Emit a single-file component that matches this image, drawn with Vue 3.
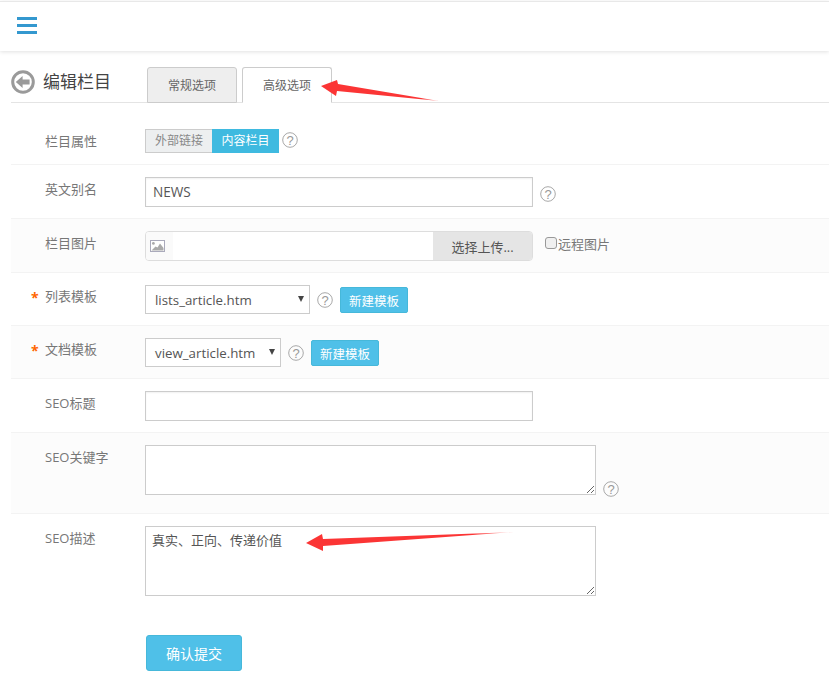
<script setup>
import { ref } from 'vue'
const description = ref('真实、正向、传递价值')
</script>

<template>
  <div class="page">
    <header class="topbar">
      <div class="burger"><i></i><i></i><i></i></div>
    </header>

    <div class="heading">
      <div class="title">
        <svg class="back" width="24" height="24" viewBox="0 0 24 24">
          <circle cx="12" cy="12" r="10.3" fill="#fff" stroke="#9a9a9a" stroke-width="3" />
          <path d="M4.8 12 L11.6 6 V9.6 H18.6 V14.4 H11.6 V18 Z" fill="#9a9a9a" />
        </svg>
        <span>编辑栏目</span>
      </div>
      <div class="tabs">
        <div class="tab off">常规选项</div>
        <div class="tab on">高级选项</div>
      </div>
    </div>

    <form class="form" @submit.prevent>
      <div class="row r1">
        <label class="lab">栏目属性</label>
        <div class="switch"><span class="sw-off">外部链接</span><span class="sw-on">内容栏目</span></div>
        <svg class="q q1" width="16" height="16" viewBox="0 0 16 16"><circle cx="8" cy="8" r="7.3" /><text x="8" y="12.5" text-anchor="middle">?</text></svg>
      </div>

      <div class="row r2">
        <label class="lab">英文别名</label>
        <input class="inp" value="NEWS" />
        <svg class="q q2" width="16" height="16" viewBox="0 0 16 16"><circle cx="8" cy="8" r="7.3" /><text x="8" y="12.5" text-anchor="middle">?</text></svg>
      </div>

      <div class="row alt r3">
        <label class="lab">栏目图片</label>
        <div class="upload">
          <span class="up-icon">
            <svg width="15" height="12" viewBox="0 0 15 12">
              <rect x=".5" y=".5" width="14" height="11" fill="#fff" stroke="#aab" />
              <circle cx="3.4" cy="3.4" r="1.4" fill="#aaa" />
              <path d="M1.5 10.5 L5.5 6.5 L7.5 7.5 L10 3.5 L13.5 8 V10.5 Z" fill="#aaa" />
            </svg>
          </span>
          <span class="up-field"></span>
          <span class="up-btn">选择上传...</span>
        </div>
        <label class="remote"><span class="check"></span>远程图片</label>
      </div>

      <div class="row r4">
        <label class="lab"><em>*</em>列表模板</label>
        <div class="sel w165"><span>lists_article.htm</span><b></b></div>
        <svg class="q q3" width="16" height="16" viewBox="0 0 16 16"><circle cx="8" cy="8" r="7.3" /><text x="8" y="12.5" text-anchor="middle">?</text></svg>
        <button class="new" type="button">新建模板</button>
      </div>

      <div class="row alt r5">
        <label class="lab"><em>*</em>文档模板</label>
        <div class="sel w136"><span>view_article.htm</span><b></b></div>
        <svg class="q q3" width="16" height="16" viewBox="0 0 16 16"><circle cx="8" cy="8" r="7.3" /><text x="8" y="12.5" text-anchor="middle">?</text></svg>
        <button class="new" type="button">新建模板</button>
      </div>

      <div class="row r6">
        <label class="lab">SEO标题</label>
        <input class="inp" />
      </div>

      <div class="row alt r7">
        <label class="lab">SEO关键字</label>
        <textarea class="area a50"></textarea>
        <svg class="q q4" width="16" height="16" viewBox="0 0 16 16"><circle cx="8" cy="8" r="7.3" /><text x="8" y="12.5" text-anchor="middle">?</text></svg>
      </div>

      <div class="row r8">
        <label class="lab">SEO描述</label>
        <textarea class="area a70" v-model="description"></textarea>
      </div>

      <div class="actions">
        <button class="submit" type="button">确认提交</button>
      </div>
    </form>

    <svg class="marks" width="829" height="682" viewBox="0 0 829 682">
      <defs>
        <linearGradient id="fa" x1="0" x2="1" y1="0" y2="0">
          <stop offset="0" stop-color="#fb3535" />
          <stop offset=".85" stop-color="#fb3535" />
          <stop offset="1" stop-color="#fb3535" stop-opacity=".35" />
        </linearGradient>
        <linearGradient id="fb" x1="0" x2="1" y1="0" y2="0">
          <stop offset="0" stop-color="#fb3535" />
          <stop offset=".8" stop-color="#fb3535" />
          <stop offset="1" stop-color="#fb3535" stop-opacity=".3" />
        </linearGradient>
      </defs>
      <path d="M321 86 L337 80 L338 84 L439 101 L337 91 L336 96 Z" fill="url(#fa)" />
      <path d="M306 543 L322 534 L323 539 L514 532 L323 546 L323 551 Z" fill="url(#fb)" />
    </svg>
  </div>
</template>

<style>
html, body { margin: 0; background: #fff; overflow: hidden; }
</style>

<style scoped>
.page {
  position: relative;
  width: 829px;
  height: 682px;
  overflow: hidden;
  background: #fff;
  font-family: "Open Sans", "Noto Sans CJK SC", sans-serif;
  font-size: 13px;
  color: #666;
}
.topbar {
  box-sizing: border-box;
  height: 50px;
  margin-top: 1px;
  border-top: 1px solid #e8e8e8;
  box-shadow: 0 1px 4px rgba(0, 0, 0, .12);
  padding: 15px 0 0 17px;
}
.burger { display: flex; flex-direction: column; gap: 4px; width: 20px; }
.burger i { display: block; height: 3px; background: #3498cf; }
.heading {
  box-sizing: border-box;
  height: 52px;
  margin: 0 0 0 11px;
  padding-top: 16px;
  border-bottom: 1px solid #e4e4e4;
  display: flex;
}
.title {
  width: 136px;
  display: flex;
  align-items: flex-start;
  gap: 8px;
  font-size: 17px;
  color: #444;
  padding-top: 3px;
  line-height: 24px;
}
.back { flex: none; }
.tabs { display: flex; gap: 5px; }
.tab {
  box-sizing: border-box;
  width: 90px;
  height: 36px;
  border: 1px solid #ccc;
  border-radius: 3px 3px 0 0;
  text-align: center;
  line-height: 36px;
  font-size: 12px;
  color: #666;
}
.tab.off { background: #eee; }
.tab.on { background: #fff; border-bottom-color: #fff; }
.form { margin-left: 11px; }
.row {
  box-sizing: border-box;
  display: flex;
  align-items: flex-start;
  border-bottom: 1px solid #f3f3f3;
  padding-left: 134px;
  position: relative;
}
.row.alt { background: #fcfcfc; }
.r1 { height: 62px; padding-top: 26px; }
.r2 { height: 54px; padding-top: 12px; }
.r3 { height: 54px; padding-top: 12px; }
.r4 { height: 53px; padding-top: 12px; }
.r5 { height: 53px; padding-top: 12px; }
.r6 { height: 54px; padding-top: 12px; }
.r7 { height: 81px; padding-top: 12px; }
.r8 { height: 100px; padding-top: 12px; border-bottom: 0; }
.lab {
  position: absolute;
  left: 34px;
  top: 0;
  line-height: 20px;
  color: #777;
  font-size: 13px;
}
.r1 .lab { top: 28px; }
.r2 .lab, .r3 .lab, .r6 .lab, .r7 .lab, .r8 .lab { top: 14px; }
.r4 .lab, .r5 .lab { top: 13px; }
.lab em {
  position: absolute;
  left: -14px;
  top: 2px;
  color: #f60;
  font-style: normal;
  font-weight: 700;
  font-size: 14px;
}
.switch {
  display: flex;
  height: 24px;
  font-size: 12px;
  line-height: 22px;
}
.sw-off {
  box-sizing: border-box;
  width: 67px;
  background: #edeff0;
  border: 1px solid #ccc;
  border-right: 0;
  text-align: center;
  color: #888;
}
.sw-on {
  box-sizing: border-box;
  width: 67px;
  background: #3fbae0;
  color: #fff;
  text-align: center;
  line-height: 24px;
}
.q { flex: none; }
.q circle { fill: none; stroke: #a8a8a8; stroke-width: 1; }
.q text { font-size: 13px; fill: #999; font-family: "Liberation Sans", sans-serif; }
.q1 { margin: 3px 0 0 3px; }
.q2 { margin: 9px 0 0 7px; }
.q3 { margin: 7px 0 0 7px; }
.q4 { margin: 36px 0 0 7px; }
.inp {
  box-sizing: border-box;
  width: 388px;
  height: 30px;
  padding: 0 7px 2px;
  border: 1px solid #ccc;
  box-shadow: inset 0 1px 2px rgba(0, 0, 0, .06);
  outline: 0;
  background: #fff;
  font: inherit;
  font-size: 13.6px;
  color: #555;
}
.upload {
  box-sizing: border-box;
  width: 388px;
  height: 30px;
  display: flex;
  border: 1px solid #ddd;
  border-radius: 4px;
  background: #fff;
  overflow: hidden;
}
.up-icon {
  box-sizing: border-box;
  width: 27px;
  padding: 8px 0 0 4px;
  background: #fafafa;
}
.up-icon svg { display: block; }
.up-field { flex: 1; }
.up-btn {
  width: 99px;
  background: #e5e5e5;
  text-align: center;
  font-size: 13px;
  line-height: 30px;
  color: #555;
}
.remote {
  display: flex;
  align-items: flex-start;
  margin-left: 12px;
  line-height: 26px;
  color: #777;
  font-size: 13px;
}
.check {
  box-sizing: border-box;
  width: 12px;
  height: 12px;
  margin: 6px 1px 0 0;
  border: 1px solid #999;
  border-radius: 3px;
  background: #f0f0f0;
}
.sel {
  box-sizing: border-box;
  height: 29px;
  position: relative;
  padding-left: 9px;
  border: 1px solid #ccc;
  background: #fff;
  font-size: 13.3px;
  line-height: 28px;
  color: #555;
}
.w165 { width: 165px; }
.w136 { width: 136px; }
.sel b {
  position: absolute;
  right: 5px;
  top: 10px;
  border-left: 3.5px solid transparent;
  border-right: 3.5px solid transparent;
  border-top: 6px solid #444;
}
.new {
  box-sizing: border-box;
  width: 68px;
  height: 26px;
  margin: 2px 0 0 7px;
  padding: 0;
  border: 1px solid #46b8da;
  border-radius: 2px;
  background: #4fc0e8;
  color: #fff;
  font: inherit;
  font-size: 12.5px;
}
.area {
  box-sizing: border-box;
  width: 451px;
  display: block;
  padding: 3px 6px;
  border: 1px solid #ccc;
  outline: 0;
  background: #fff;
  font: inherit;
  font-size: 13px;
  color: #555;
  resize: vertical;
}
.a50 { height: 50px; }
.a70 { height: 70px; }
.actions { padding: 0 0 0 135px; margin-top: 21px; }
.submit {
  box-sizing: border-box;
  width: 96px;
  height: 36px;
  padding: 0;
  border: 1px solid #46b8da;
  border-radius: 3px;
  background: #4fc0e8;
  color: #fff;
  font: inherit;
  font-size: 14px;
}
.marks { position: absolute; left: 0; top: 0; pointer-events: none; }
</style>
